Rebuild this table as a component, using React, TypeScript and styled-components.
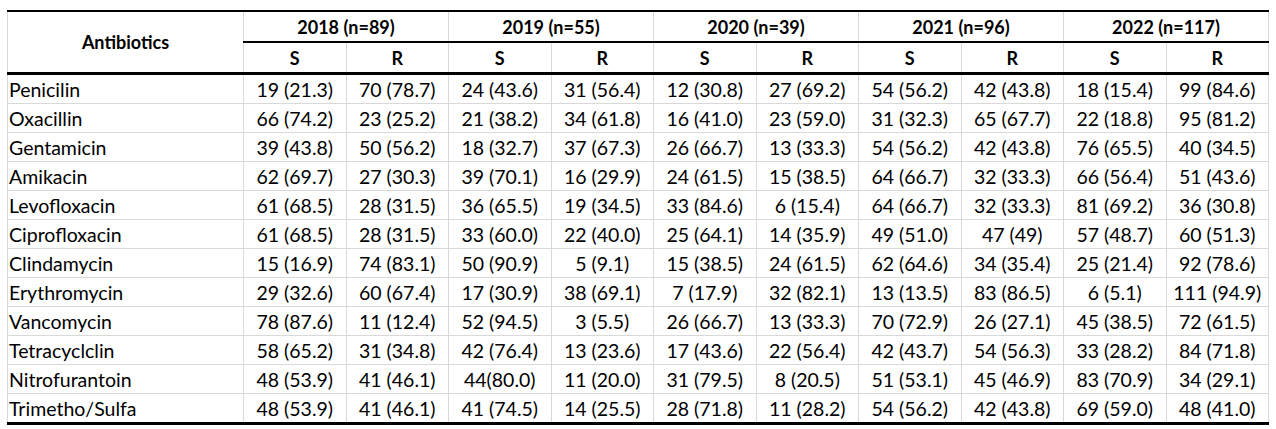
import React, { FC } from "react";
import styled, { createGlobalStyle } from "styled-components";

const GlobalStyle = createGlobalStyle`
  body {
    margin: 0;
    background: #fff;
    font-family: Lato, "Liberation Sans", sans-serif;
    color: #000;
  }
`;

const Page = styled.div`
  padding: 10px 8px 0 7px;
`;

const Table = styled.table`
  border-collapse: collapse;
  table-layout: fixed;
  width: 1262px;
  border-top: 2px solid #000;
  border-bottom: 3px solid #000;
`;

const HeadCell = styled.th<{ $underline?: "thin" | "thick" }>`
  font-size: 18px;
  font-weight: 700;
  text-align: center;
  height: 29px;
  padding: 0;
  border-left: 1px solid #d9d9d9;
  border-right: 1px solid #d9d9d9;
  border-bottom: ${(p) =>
    p.$underline === "thick"
      ? "3px solid #000"
      : p.$underline === "thin"
      ? "2px solid #000"
      : "1px solid #d9d9d9"};
`;

const NameCell = styled.td`
  font-size: 19.5px;
  text-align: left;
  padding: 0 0 0 1px;
  height: 28px;
  border: 1px solid #d9d9d9;
  white-space: nowrap;
`;

const ValueCell = styled.td`
  font-size: 19.5px;
  text-align: center;
  padding: 0;
  height: 28px;
  border: 1px solid #d9d9d9;
  white-space: nowrap;
`;

const years = ["2018 (n=89)", "2019 (n=55)", "2020 (n=39)", "2021 (n=96)", "2022 (n=117)"];

const rows: [string, string[]][] = [
  ["Penicilin", ["19 (21.3)", "70 (78.7)", "24 (43.6)", "31 (56.4)", "12 (30.8)", "27 (69.2)", "54 (56.2)", "42 (43.8)", "18 (15.4)", "99 (84.6)"]],
  ["Oxacillin", ["66 (74.2)", "23 (25.2)", "21 (38.2)", "34 (61.8)", "16 (41.0)", "23 (59.0)", "31 (32.3)", "65 (67.7)", "22 (18.8)", "95 (81.2)"]],
  ["Gentamicin", ["39 (43.8)", "50 (56.2)", "18 (32.7)", "37 (67.3)", "26 (66.7)", "13 (33.3)", "54 (56.2)", "42 (43.8)", "76 (65.5)", "40 (34.5)"]],
  ["Amikacin", ["62 (69.7)", "27 (30.3)", "39 (70.1)", "16 (29.9)", "24 (61.5)", "15 (38.5)", "64 (66.7)", "32 (33.3)", "66 (56.4)", "51 (43.6)"]],
  ["Levofloxacin", ["61 (68.5)", "28 (31.5)", "36 (65.5)", "19 (34.5)", "33 (84.6)", "6 (15.4)", "64 (66.7)", "32 (33.3)", "81 (69.2)", "36 (30.8)"]],
  ["Ciprofloxacin", ["61 (68.5)", "28 (31.5)", "33 (60.0)", "22 (40.0)", "25 (64.1)", "14 (35.9)", "49 (51.0)", "47 (49)", "57 (48.7)", "60 (51.3)"]],
  ["Clindamycin", ["15 (16.9)", "74 (83.1)", "50 (90.9)", "5 (9.1)", "15 (38.5)", "24 (61.5)", "62 (64.6)", "34 (35.4)", "25 (21.4)", "92 (78.6)"]],
  ["Erythromycin", ["29 (32.6)", "60 (67.4)", "17 (30.9)", "38 (69.1)", "7 (17.9)", "32 (82.1)", "13 (13.5)", "83 (86.5)", "6 (5.1)", "111 (94.9)"]],
  ["Vancomycin", ["78 (87.6)", "11 (12.4)", "52 (94.5)", "3 (5.5)", "26 (66.7)", "13 (33.3)", "70 (72.9)", "26 (27.1)", "45 (38.5)", "72 (61.5)"]],
  ["Tetracyclclin", ["58 (65.2)", "31 (34.8)", "42 (76.4)", "13 (23.6)", "17 (43.6)", "22 (56.4)", "42 (43.7)", "54 (56.3)", "33 (28.2)", "84 (71.8)"]],
  ["Nitrofurantoin", ["48 (53.9)", "41 (46.1)", "44(80.0)", "11 (20.0)", "31 (79.5)", "8 (20.5)", "51 (53.1)", "45 (46.9)", "83 (70.9)", "34 (29.1)"]],
  ["Trimetho/Sulfa", ["48 (53.9)", "41 (46.1)", "41 (74.5)", "14 (25.5)", "28 (71.8)", "11 (28.2)", "54 (56.2)", "42 (43.8)", "69 (59.0)", "48 (41.0)"]],
];

const App: FC = () => {
  return (
    <Page>
      <GlobalStyle />
      <Table>
        <colgroup>
          <col style={{ width: 236 }} />
          {Array.from({ length: 10 }).map((_, i) => (
            <col key={i} />
          ))}
        </colgroup>
        <thead>
          <tr>
            <HeadCell rowSpan={2} $underline="thick">
              Antibiotics
            </HeadCell>
            {years.map((y) => (
              <HeadCell key={y} colSpan={2} $underline="thin">
                {y}
              </HeadCell>
            ))}
          </tr>
          <tr>
            {years.map((y) => (
              <React.Fragment key={y}>
                <HeadCell $underline="thick">S</HeadCell>
                <HeadCell $underline="thick">R</HeadCell>
              </React.Fragment>
            ))}
          </tr>
        </thead>
        <tbody>
          {rows.map(([name, values]) => (
            <tr key={name}>
              <NameCell>{name}</NameCell>
              {values.map((v, i) => (
                <ValueCell key={i}>{v}</ValueCell>
              ))}
            </tr>
          ))}
        </tbody>
      </Table>
    </Page>
  );
};

export default App;
